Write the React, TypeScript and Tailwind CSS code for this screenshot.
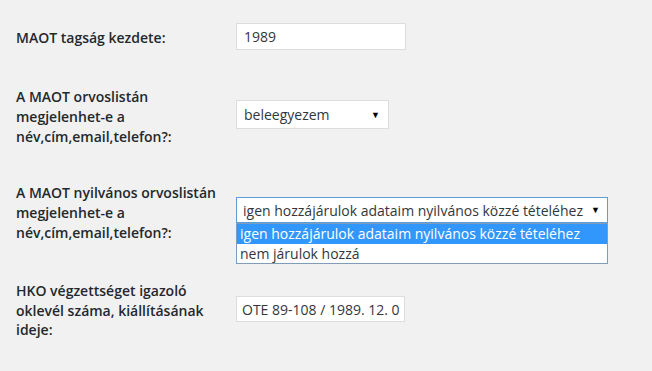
export default function App() {
  return (
    <div
      className="min-h-[371px] w-[652px] bg-[#f1f1f1] text-[14px] text-[#23282d]"
      style={{ fontFamily: '"Open Sans", "Liberation Sans", sans-serif' }}
    >
      <div className="flex flex-col pl-4 pt-[28px]">
        {/* tagság kezdete */}
        <div className="flex items-start">
          <div className="w-[220px] font-semibold leading-[20px]">MAOT tagság kezdete:</div>
          <div className="mt-[-5px] flex h-[27px] w-[170px] items-center border border-[#dddddd] bg-white px-[7px] text-[#32373c]">
            1989
          </div>
        </div>

        {/* orvoslista */}
        <div className="mt-[37px] flex items-start">
          <div className="w-[220px] font-semibold leading-[20px]">
            A MAOT orvoslistán
            <br />
            megjelenhet-e a
            <br />
            név,cím,email,telefon?:
          </div>
          <div className="mt-[13px] flex h-[29px] w-[153px] items-center justify-between border border-[#dddddd] bg-white pl-[7px] pr-[8px] text-[#32373c]">
            <span>beleegyezem</span>
            <span className="text-[9px] text-black">▼</span>
          </div>
        </div>

        {/* nyilvános orvoslista */}
        <div className="mt-[36px] flex items-start">
          <div className="w-[220px] font-semibold leading-[20px]">
            A MAOT nyilvános orvoslistán
            <br />
            megjelenhet-e a
            <br />
            név,cím,email,telefon?:
          </div>
          <div className="relative mt-[14px]">
            <div className="flex h-[26px] w-[372px] items-center justify-between border border-[#5b9dd9] bg-white pl-[6px] pr-[7px] text-[#32373c]">
              <span>igen hozzájárulok adataim nyilvános közzé tételéhez</span>
              <span className="text-[9px] text-black">▼</span>
            </div>
            <div className="absolute left-0 top-full z-10 w-[372px] border border-[#7f9db9] bg-white leading-[20px]">
              <div className="bg-[#3297fd] px-[3px] text-white">
                igen hozzájárulok adataim nyilvános közzé tételéhez
              </div>
              <div className="h-[19px] px-[3px] leading-[19px] text-[#32373c]">nem járulok hozzá</div>
            </div>
          </div>
        </div>

        {/* HKO oklevél */}
        <div className="mt-[38px] flex items-start">
          <div className="w-[220px] font-semibold leading-[19.5px]">
            HKO végzettséget igazoló
            <br />
            oklevél száma, kiállításának
            <br />
            ideje:
          </div>
          <div className="mt-[15px] flex h-[26px] w-[169px] items-center overflow-hidden whitespace-nowrap border border-[#dddddd] bg-white px-[5px] text-[#32373c]">
            OTE 89-108 / 1989. 12. 0
          </div>
        </div>
      </div>
    </div>
  );
}
